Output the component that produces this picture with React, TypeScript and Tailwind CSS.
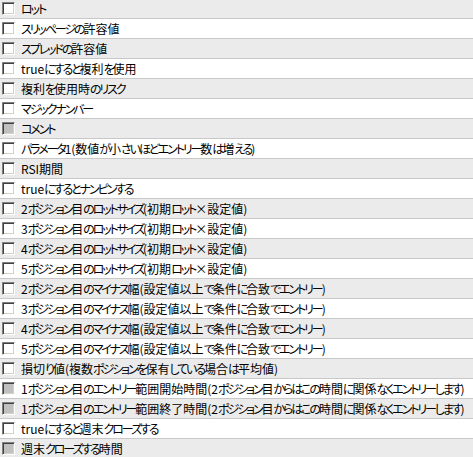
const rows: { label: string; disabled?: boolean }[] = [
  { label: 'ロット' },
  { label: 'スリッページの許容値' },
  { label: 'スプレッドの許容値' },
  { label: 'trueにすると複利を使用' },
  { label: '複利を使用時のリスク' },
  { label: 'マジックナンバー' },
  { label: 'コメント', disabled: true },
  { label: 'パラメータ1(数値が小さいほどエントリー数は増える)' },
  { label: 'RSI期間' },
  { label: 'trueにするとナンピンする' },
  { label: '2ポジション目のロットサイズ(初期ロット×設定値)' },
  { label: '3ポジション目のロットサイズ(初期ロット×設定値)' },
  { label: '4ポジション目のロットサイズ(初期ロット×設定値)' },
  { label: '5ポジション目のロットサイズ(初期ロット×設定値)' },
  { label: '2ポジション目のマイナス幅(設定値以上で条件に合致でエントリー)' },
  { label: '3ポジション目のマイナス幅(設定値以上で条件に合致でエントリー)' },
  { label: '4ポジション目のマイナス幅(設定値以上で条件に合致でエントリー)' },
  { label: '5ポジション目のマイナス幅(設定値以上で条件に合致でエントリー)' },
  { label: '損切り値(複数ポジションを保有している場合は平均値)' },
  { label: '1ポジション目のエントリー範囲開始時間(2ポジション目からはこの時間に関係なくエントリーします)', disabled: true },
  { label: '1ポジション目のエントリー範囲終了時間(2ポジション目からはこの時間に関係なくエントリーします)', disabled: true },
  { label: 'trueにすると週末クローズする' },
  { label: '週末クローズする時間', disabled: true },
];

// kana in the original UI font are much narrower than in Noto, so squeeze those runs
function Label({ text }: { text: string }) {
  const parts = text.split(/([\u3040-\u30ff]+)/).filter(Boolean);
  return (
    <span className="whitespace-nowrap leading-none">
      {parts.map((p, i) =>
        /[\u3040-\u30ff]/.test(p) ? (
          <span key={i} className="tracking-[-2.1px]">
            {p}
          </span>
        ) : (
          <span key={i}>{p}</span>
        ),
      )}
    </span>
  );
}

function Check({ disabled }: { disabled?: boolean }) {
  return (
    <span
      className={`block h-[13px] w-[13px] shrink-0 border border-t-[#808080] border-l-[#808080] border-b-white border-r-white shadow-[inset_1px_1px_0_#404040,inset_-1px_-1px_0_#d4d0c8] ${
        disabled ? 'bg-[#c0c0c0]' : 'bg-white'
      }`}
    />
  );
}

export default function App() {
  return (
    <div className="h-[457px] w-[473px] overflow-hidden bg-white font-['Noto_Sans_CJK_JP',sans-serif] text-[12px] text-black [font-feature-settings:'palt']">
      <div className="-mt-px">
        {rows.map((r, i) => (
          <div
            key={i}
            className={`flex h-[20px] items-center gap-[6px] border-b border-[#c8c8c8] pl-[2px] ${
              i % 2 === 0 ? 'bg-[#ebebeb]' : 'bg-white'
            }`}
          >
            <Check disabled={r.disabled} />
            <Label text={r.label} />
          </div>
        ))}
      </div>
    </div>
  );
}
